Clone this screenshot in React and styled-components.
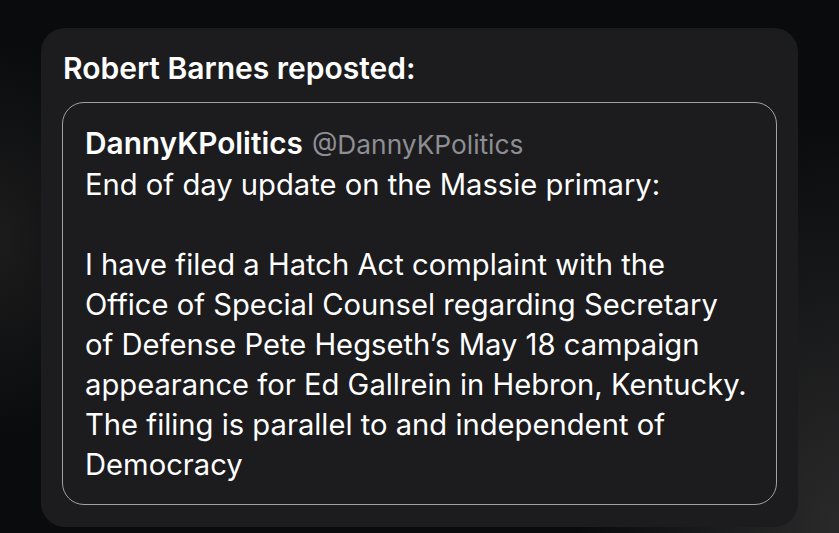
import styled, { createGlobalStyle } from "styled-components";

const GlobalStyle = createGlobalStyle`
  html, body {
    margin: 0;
    padding: 0;
    height: 100%;
  }
  body {
    background:
      radial-gradient(ellipse 260px 420px at 100% 100%, #2a2a2b 0%, rgba(42,42,43,0) 100%),
      radial-gradient(ellipse 120px 200px at 0% 45%, #1c1c1d 0%, rgba(28,28,29,0) 100%),
      #0a0b0c;
    font-family: Inter, "Noto Sans", "Liberation Sans", sans-serif;
    color: #fff;
    -webkit-font-smoothing: antialiased;
  }
  #root {
    min-height: 533px;
  }
`;

const Page = styled.div`
  display: flex;
  padding: 28px 41px 6px 41px;
`;

const Card = styled.section`
  flex: 1;
  background: #1c1c1e;
  border-radius: 24px;
  padding: 23px 21px 22px 21px;
  display: flex;
  flex-direction: column;
  gap: 17px;
`;

const Header = styled.h2`
  margin: 0;
  padding-left: 1px;
  font-size: 30px;
  line-height: 34px;
  font-weight: 600;
`;

const Quote = styled.div`
  border: 1px solid #a1a1a6;
  border-radius: 22px;
  padding: 20px 22px 19px 22px;
  font-size: 29.2px;
  line-height: 40px;
`;

const Author = styled.div`
  display: flex;
  align-items: baseline;
  gap: 9px;
`;

const Name = styled.span`
  font-weight: 600;
  font-size: 29.8px;
`;

const Handle = styled.span`
  color: #8e8e93;
  font-size: 26.3px;
`;

const Body = styled.p`
  margin: 0;
  white-space: pre-line;
`;

const text = `End of day update on the Massie primary:

I have filed a Hatch Act complaint with the
Office of Special Counsel regarding Secretary
of Defense Pete Hegseth’s May 18 campaign
appearance for Ed Gallrein in Hebron, Kentucky.
The filing is parallel to and independent of
Democracy`;

export default function App() {
  return (
    <>
      <GlobalStyle />
      <Page>
        <Card>
          <Header>Robert Barnes reposted:</Header>
          <Quote>
            <Author>
              <Name>DannyKPolitics</Name>
              <Handle>@DannyKPolitics</Handle>
            </Author>
            <Body>{text}</Body>
          </Quote>
        </Card>
      </Page>
    </>
  );
}
